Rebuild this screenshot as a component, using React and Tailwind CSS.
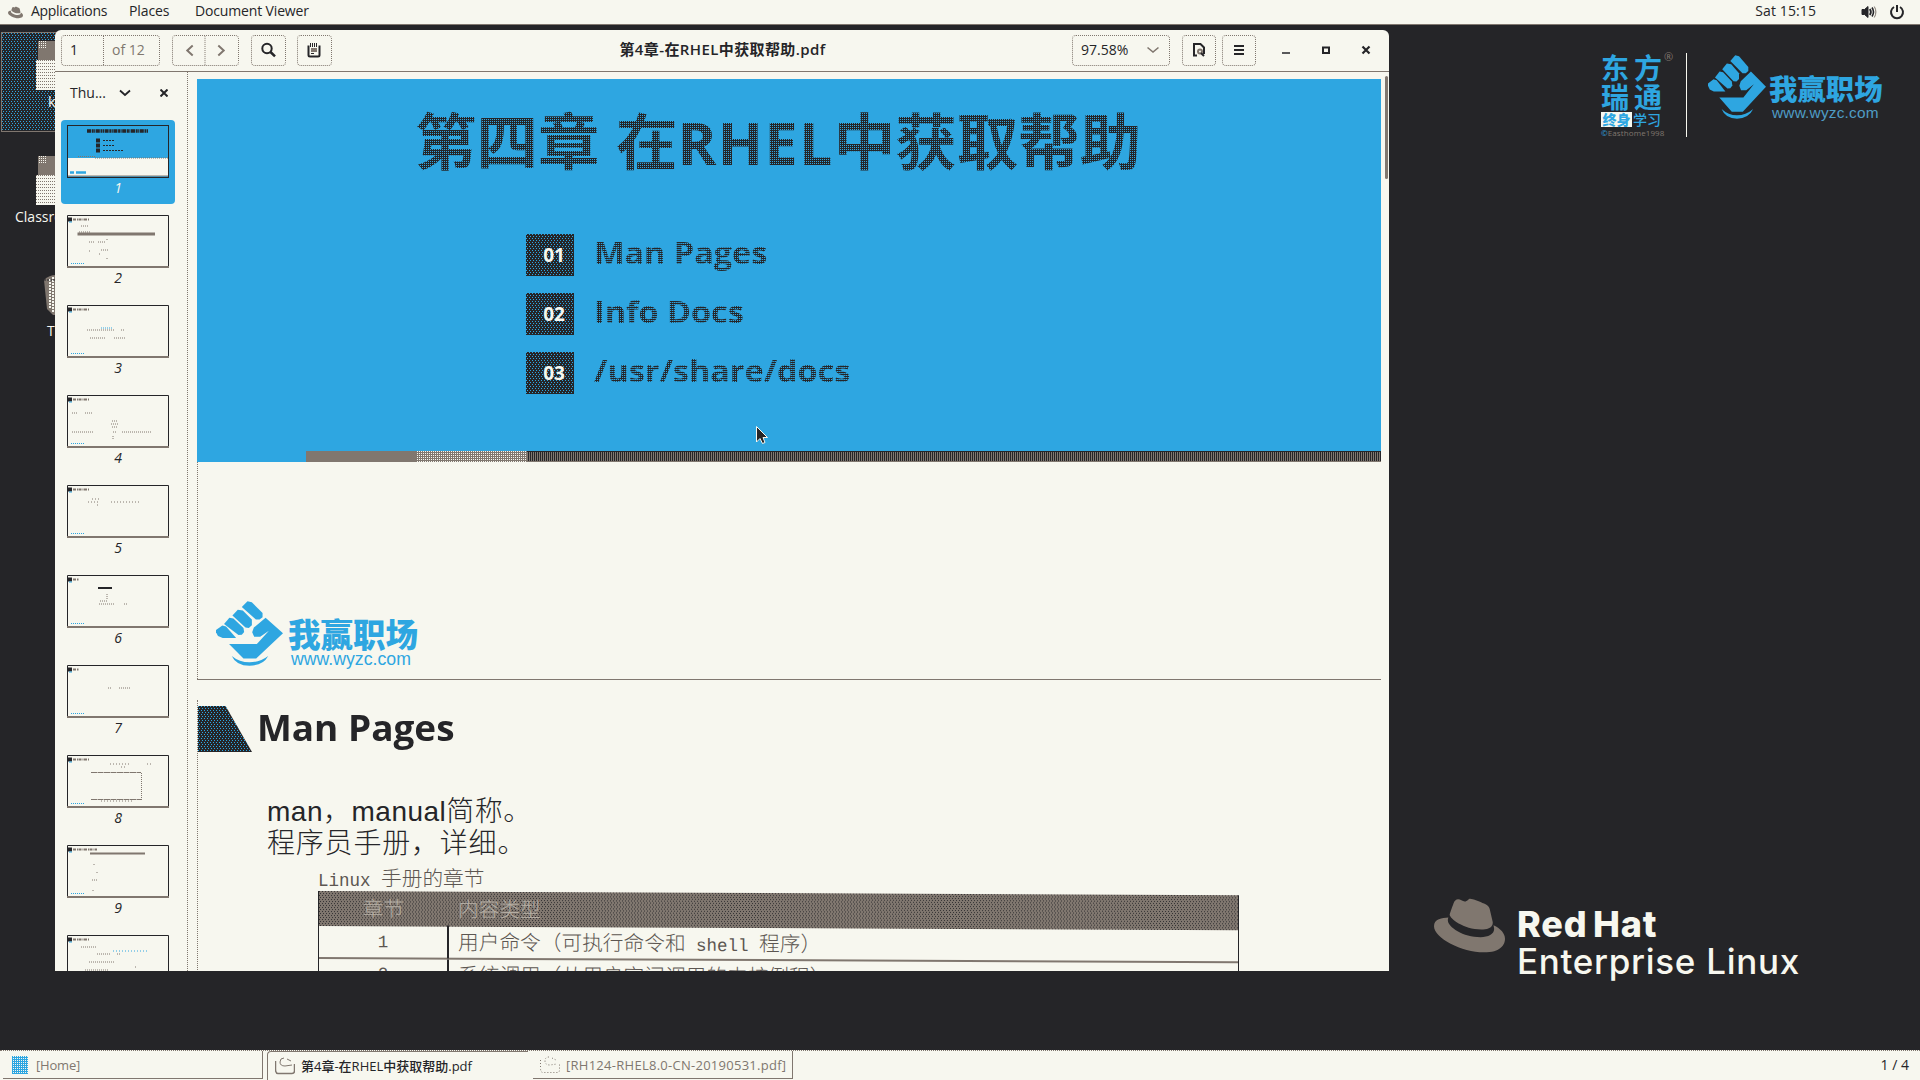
import React from "react";
import { SiRedhat } from "react-icons/si";

const UI = "font-['Open_Sans','Noto_Sans_CJK_SC',sans-serif]";
const CJK = "font-['Noto_Sans_CJK_SC',sans-serif]";
const DITHER = "bg-[conic-gradient(#2ea6e1_25%,#252528_0)] bg-[length:2px_2px]";
const SPECKLE =
  "bg-[#252528] bg-[image:conic-gradient(from_270deg_at_1px_1px,#2ea6e1_25%,transparent_0),conic-gradient(from_270deg_at_1px_1px,#2ea6e1_25%,transparent_0)] bg-[length:3px_4px] bg-[position:0_0,1px_2px]";
const GRAY_SPECKLE =
  "bg-[#80776f] bg-[image:conic-gradient(from_270deg_at_1px_1px,#252528_25%,transparent_0),conic-gradient(from_270deg_at_1px_1px,#252528_25%,transparent_0)] bg-[length:3px_4px] bg-[position:0_0,1px_2px]";

function Fist({ className }) {
  return (
    <svg viewBox="0 0 200 193" className={className} fill="#2ea6e1" preserveAspectRatio="none">
      <path d="M94 1 107 4 139 36V48L130 55H119L77 18Z" />
      <path d="M65 26 80 28 107 55V72L98 80 88 79 49 43Z" />
      <path d="M40 50 52 52 82 80 84 92 77 100 67 101 24 68Z" />
      <path d="M19 73 30 76 60 110H20L6 104 0 93V86Z" />
      <path d="M148 50 200 96 120 171H82L39 128H122L158 88 132 106H114L108 93 113 79Z" />
      <path d="M47 163Q70 182 100 182T156 163Q140 192 100 192T47 163Z" />
    </svg>
  );
}

function TopBar() {
  return (
    <header className="flex h-[25px] shrink-0 items-center border-b border-[#80776f] bg-[#f7f7ef] pb-[2px] text-sm leading-[22px]">
      <SiRedhat className="mt-0.5 ml-2 size-[15px] text-[#80776f]" />
      <span className="ml-2 w-[98px] tracking-[-0.3px]">Applications</span>
      <span className="w-[66px] tracking-[-0.1px]">Places</span>
      <span className="tracking-[-0.15px]">Document Viewer</span>
      <span className="ml-auto tracking-[0.1px]">Sat 15:15</span>
      <svg viewBox="0 0 16 14" className="mt-px ml-[45px] h-[14px] w-4" fill="none" stroke="#252528">
        <path d="M1 4.5H3.5L7 1.5V12.5L3.5 9.5H1Z" fill="#252528" />
        <path d="M8.8 4Q11 7 8.8 10" strokeWidth="1.8" />
        <path d="M11 2.5Q14 7 11 11.5" strokeWidth="1.6" />
        <path d="M13.3 1.5Q16.5 7 13.3 12.5" stroke="#80776f" />
      </svg>
      <svg viewBox="0 0 16 16" className="mt-px mr-[15px] ml-3 size-4" fill="none" stroke="#252528" strokeWidth="2">
        <path d="M5 3A6 6 0 1 0 11 3M8 1V8" />
      </svg>
    </header>
  );
}

function Folder() {
  return (
    <div className="flex w-6 flex-col">
      <div className="ml-0.5 h-[19px] bg-[#80776f]">
        <div className="size-2 bg-[conic-gradient(#f7f7ef_25%,#80776f_0)] bg-[length:2px_2px]" />
      </div>
      <div className="h-[30px] bg-[conic-gradient(from_270deg_at_1px_1px,#80776f_25%,#f7f7ef_0)] bg-[length:2px_3px]" />
    </div>
  );
}

function DesktopIcons() {
  return (
    <div className="absolute top-[7px] left-px w-[90px] text-sm text-[#f7f7ef]">
      <div className={`h-[100px] w-[60px] border border-[#80776f] pt-2 pl-[34px] ${SPECKLE}`}>
        <Folder />
        <div className="pt-[2px] pl-3 leading-5">kiosk</div>
      </div>
      <div className="pt-6 pl-[35px]">
        <Folder />
      </div>
      <div className="pl-[14px] leading-[24px]">Classroom</div>
      <svg viewBox="0 0 24 40" className="mt-[46px] ml-[43px] h-10 w-6">
        <path d="M0 5Q5 0 12 0H24V40H9L3 34Z" fill="#80776f" />
        <path d="M6 4V34M9 2V37" stroke="#f7f7ef" strokeWidth="2" strokeDasharray="2 1" />
        <path d="M0 5H24" stroke="#252528" strokeDasharray="2 1" />
      </svg>
      <div className="pt-[4px] pl-[46px] leading-6">Trash</div>
    </div>
  );
}

function CompanyLogos() {
  return (
    <div className="absolute top-[28px] right-[37px] flex h-[84px] text-[#2ea6e1]">
      <div className={`w-[61px] font-bold ${CJK}`}>
        <div className="flex justify-between text-[28px] leading-[29px]"><span>东</span><span>方</span></div>
        <div className="flex justify-between text-[28px] leading-[29px]"><span>瑞</span><span>通</span></div>
        <div className="mt-[1px] flex text-[14px] leading-[15px]">
          <span className="w-[31px] bg-[#f7f7ef] text-center font-black">终身</span>
          <span className="w-[30px] text-center font-medium">学习</span>
        </div>
        <div className="pt-[2px] font-['Open_Sans',sans-serif] text-[8px] leading-[8px] font-normal tracking-[0.1px] whitespace-nowrap text-[#80776f]">
          <span className="text-[#2ea6e1]">©</span>Easthome1998
        </div>
      </div>
      <span className="w-[24px] pl-[2px] text-[11px] leading-[8px] text-[#80776f]">®</span>
      <div className="h-[84px] w-px bg-[#f7f7ef]" />
      <Fist className="mt-[2px] ml-[21px] h-[64px] w-[58px]" />
      <div className="ml-[3px] w-[114px] pt-[18px]">
        <div className={`text-[28.400px] leading-[34px] font-black whitespace-nowrap ${CJK}`}>我赢职场</div>
        <div className="pl-[3px] font-['Liberation_Sans',sans-serif] text-[15.4px] leading-[16px] tracking-[0.200px] text-[#4f9cc4]">www.wyzc.com</div>
      </div>
    </div>
  );
}

function RedHatLogo() {
  return (
    <div className="absolute top-[863px] left-[1434px] flex font-['Inter',sans-serif] text-[#f7f7ef]">
      <SiRedhat className="mt-[2px] size-[71px] text-[#80776f]" />
      <div className="ml-[12px] pt-[18px] whitespace-nowrap">
        <div className="text-[36px] leading-[37px] font-extrabold tracking-[0.800px] [word-spacing:-3px]">Red Hat</div>
        <div className="text-[35px] leading-[36px] font-medium tracking-[0.700px]">Enterprise Linux</div>
      </div>
    </div>
  );
}

const BOX = "flex h-[31px] items-center rounded border border-dotted border-[#80776f]";

function HeaderBar() {
  return (
    <div className="flex h-[42px] shrink-0 items-center border-b border-[#80776f] pb-px pl-[6px] text-sm">
      <div className={`${BOX} w-[99px]`}>
        <span className="w-[41px] pl-[8px]">1</span>
        <span className="h-[29px] flex-1 border-l border-dotted border-[#80776f] pl-[8px] leading-[28px] text-[#80776f]">of 12</span>
      </div>
      <div className={`${BOX} ml-3 w-[67px]`}>
        <svg viewBox="0 0 66 29" className="h-[29px] w-[66px]" fill="none" stroke="#80776f" strokeWidth="2">
          <path d="M20 9.500 14.500 14.500 20 19.500M46 9.500 51.500 14.500 46 19.500" />
          <path d="M32.500 0V29" strokeWidth="1" strokeDasharray="1 1" />
        </svg>
      </div>
      <div className={`${BOX} ml-3 w-[35px] pl-2`}>
        <svg viewBox="0 0 16 16" className="size-4" fill="none" stroke="#252528">
          <circle cx="7" cy="6.500" r="4.700" strokeWidth="2" />
          <path d="M10.500 10 15 14.300" strokeWidth="2.500" />
        </svg>
      </div>
      <div className={`${BOX} ml-[11px] w-[35px] pl-2`}>
        <svg viewBox="0 0 16 16" className="size-4" fill="none" stroke="#252528">
          <path d="M2.500 3.500V13Q2.500 14.500 4 14.500H12Q13.500 14.500 13.500 13V3.500" strokeWidth="2" />
          <path d="M4.500 1V5M6.500 1V5M8.500 1V5M10.500 1V5" />
          <path d="M5 7H11M5 9H11" stroke="#80776f" strokeWidth="2" />
          <path d="M5 11.500H8" />
        </svg>
      </div>
      <div className="flex-1 pl-[41px] text-center text-[15px] font-semibold tracking-[0.4px]">
        第4章-在RHEL中获取帮助.pdf
      </div>
      <div className={`${BOX} w-[98px] pr-2.5 pl-2`}>
        <span>97.58%</span>
        <svg viewBox="0 0 12 8" className="ml-auto h-2 w-3" fill="none" stroke="#80776f" strokeWidth="1.600"><path d="M.5 1.500 6 6 11.500 1.500" /></svg>
      </div>
      <div className={`${BOX} ml-3 w-[34px] justify-center`}>
        <svg viewBox="0 0 14 16" className="h-4 w-3.5" fill="none" stroke="#252528" strokeWidth="2">
          <path d="M5 13.500H2V2H8.500L12 5.500V12" />
          <circle cx="8" cy="9.500" r="2" stroke="#80776f" />
          <path d="M9 11 12 14" />
        </svg>
      </div>
      <div className={`${BOX} ml-[6px] w-[34px] justify-center`}>
        <svg viewBox="0 0 10 10" className="size-2.5" stroke="#252528" strokeWidth="2"><path d="M0 1H10M0 5H10M0 9H10" /></svg>
      </div>
      <svg viewBox="0 0 90 10" className="mr-[18px] ml-[25px] h-2.5 w-[90px]" fill="none" stroke="#252528">
        <path d="M1 8H9" strokeWidth="1.600" />
        <rect x="42" y="2.500" width="6" height="5.500" strokeWidth="2" />
        <path d="M81.500 1.500 88.500 8.500M88.500 1.500 81.500 8.500" strokeWidth="2.200" />
      </svg>
    </div>
  );
}

/* Miniature page drawings: [stroke colour, path, width, dash pattern] */
const THUMBS = [
  null,
  [["#80776f", "M10.500 19H88", 3, ""], ["#80776f", "M22 27H27M31 27H38M34 35H42M22 36H24M40 24V25M32 39H34M40 43V44", 1, "1 1"], ["#80776f", "M12 17H24M14 11H22", 1, "1 1"]],
  [["#80776f", "M20 25H48M54 25H58M23 33H38M47 33H58", 1, "1 1"], ["#2ea6e1", "M34 23H45", 1, "1 1"]],
  [["#80776f", "M5 18H11M18 18H26M45 26H51M44 29H52M45 32H50M5 37H26M46 37H50M55 37H84M46 41V45", 1, "1 1"]],
  [["#80776f", "M21 17H32M44 17H72M30 20H33M25 14H32", 1, "1 2"]],
  [["#252528", "M31 13H45", 2, ""], ["#80776f", "M33 26H41M32 29H48M57 29H60M40 19V24", 1, "1 1"]],
  [["#80776f", "M41 23H44M52 23H63", 1, "1 1"]],
  [["#80776f", "M24 17.500H74M24 44.500H75", 1, "6 .5"], ["#80776f", "M74.500 18V44", 1, "1 1"], ["#80776f", "M43 9H64M80 9H84M34 46H65M54 12H60", 1, "1 2"]],
  [["#80776f", "M23 8.500H78", 2, ""], ["#80776f", "M27 19V21M30 27V28M25 35H30M26 45V46", 1, "1 1"]],
  [["#80776f", "M14 12H29M30 19H43M50 19H53M22 27H47M18 35H41M68 32H69", 1, "1 1"], ["#2ea6e1", "M46 16H80", 1, "1 2"]],
];

function Thumb({ index, marks }) {
  const n = index + 1;
  if (!marks) {
    return (
      <div className="flex h-[90px] w-full flex-col items-center">
        <div className="flex h-[84px] w-[114px] flex-col items-center rounded-sm bg-[#2ea6e1] pt-[5px] text-[#f7f7ef]">
          <svg viewBox="0 0 102 53" className="h-[53px] w-[102px]">
            <rect x=".5" y=".5" width="101" height="52" fill="#2ea6e1" stroke="#252528" />
            <rect x="1" y="33" width="100" height="18" fill="#f7f7ef" />
            <path d="M1 51H101" stroke="#80776f" />
            <path d="M11 31.500H28M28 33H101" stroke="#80776f" strokeDasharray="1 1" />
            <path d="M20 6H81" stroke="#252528" strokeWidth="3.500" strokeDasharray="4 .7 2 .5 1 .6" />
            <path d="M29 15.500H33M29 20.500H33M29 25.500H33" stroke="#252528" strokeWidth="4" />
            <path d="M36 15.500H48M36 20.500H47M36 25.500H56" stroke="#252528" strokeDasharray="2 1" />
            <path d="M3 47.500H7M9 47.500H19" stroke="#2ea6e1" strokeWidth="2.500" />
          </svg>
          <span className="text-sm leading-[20px] italic">1</span>
        </div>
      </div>
    );
  }
  return (
    <div className="flex h-[90px] w-full shrink-0 flex-col items-center pt-[5px]">
      <svg viewBox="0 0 102 53" className="h-[53px] w-[102px] shrink-0" fill="none">
        <path d="M.5 53V.5H101.500V53" stroke="#252528" />
        <path d="M0 52H102" stroke="#80776f" strokeWidth="2" />
        <path d="M1 4.500H5" stroke="#252528" strokeWidth="4" />
        <path d="M2 7H5" stroke="#2ea6e1" />
        <path d={index === 5 || index === 6 ? "M6 4.500H12" : index === 8 ? "M6 4.500H30" : "M6 4.500H22"} stroke="#80776f" strokeWidth="2" strokeDasharray="3 1 1 .5" />
        <path d="M4 48.500H17" stroke="#2ea6e1" strokeDasharray="1 1" />
        {marks.map(([c, d, w, dash], i) => (
          <path key={i} d={d} stroke={c} strokeWidth={w} strokeDasharray={dash || undefined} />
        ))}
      </svg>
      <span className="text-sm leading-[20px] italic">{n}</span>
    </div>
  );
}

function Sidebar() {
  return (
    <aside className="flex w-[133px] shrink-0 flex-col overflow-hidden border-r border-dotted border-[#80776f]">
      <div className="flex h-[48px] shrink-0 items-center pb-[7px] pl-[15px] text-sm">
        <span className="w-[49px]">Thu...</span>
        <svg viewBox="0 0 12 8" className="h-2 w-3" fill="none" stroke="#252528" strokeWidth="1.800"><path d="M1 1.500 6 6 11 1.500" /></svg>
        <svg viewBox="0 0 8 8" className="ml-[29px] size-2" stroke="#252528" strokeWidth="2"><path d="M.5.5 7.500 7.500M7.500.5.5 7.500" /></svg>
      </div>
      <div className="flex flex-col pr-[6px]">
        {THUMBS.map((marks, i) => <Thumb key={i} index={i} marks={marks} />)}
      </div>
    </aside>
  );
}

const TOPICS = [["01", "Man Pages"], ["02", "Info Docs"], ["03", "/usr/share/docs"]];

function PageOne() {
  return (
    <section className="flex h-[601px] w-[1184px] shrink-0 flex-col border-b border-[#80776f]">
      <div className="h-[372px] bg-[#2ea6e1]">
        <h1 className={`h-[155px] pt-[16px] pl-[218px] text-[61.500px] leading-[88px] font-bold whitespace-nowrap text-transparent ${CJK}`}>
          <span className={`inline-block bg-clip-text ${DITHER}`}>
            第四章<span className="text-[72px] leading-none"> </span>在<span className="font-['Open_Sans'] text-[59px] tracking-[1.500px]">RHEL</span>中获取帮助
          </span>
        </h1>
        <ul className="flex flex-col gap-[17px] pl-[329px]">
          {TOPICS.map(([num, label]) => (
            <li key={num} className="flex h-[42px] items-center">
              <span className={`flex h-[42px] w-[48px] items-center justify-center pl-2 text-[19px] font-bold text-[#f7f7ef] ${SPECKLE}`}>{num}</span>
              <span className={`ml-[20px] inline-block origin-left scale-x-[1.045] bg-clip-text pb-[6px] text-[31px] leading-[42px] font-bold text-transparent ${DITHER}`}>{label}</span>
            </li>
          ))}
        </ul>
      </div>
      <div className="flex h-[11px]">
        <div className="w-[109px] bg-[#2ea6e1]" />
        <div className="w-[110px] bg-[#80776f]" />
        <div className="w-[111px] bg-[conic-gradient(#f7f7ef_25%,#80776f_0)] bg-[length:2px_2px]" />
        <div className="flex-1 border-t border-b border-t-[#252528] border-b-[#80776f] bg-[linear-gradient(90deg,#80776f_50%,#252528_0)] bg-[length:2px_2px]" />
      </div>
      <div className="flex flex-1 border-l border-dotted border-[#80776f] pt-[139px] pl-[18px] text-[#2ea6e1]">
        <Fist className="h-[65px] w-[67px]" />
        <div className="ml-[5px] pt-[13px]">
          <div className={`text-[32.500px] leading-[37px] font-black whitespace-nowrap ${CJK}`}>我赢职场</div>
          <div className="pl-[3px] font-['Liberation_Sans',sans-serif] text-[17.700px] leading-[17px]">www.wyzc.com</div>
        </div>
      </div>
    </section>
  );
}

function PageTwo() {
  return (
    <section className="mt-[20px] flex h-[280px] w-[1184px] shrink-0 flex-col overflow-hidden border-l border-dotted border-[#80776f]">
      <div className="mt-[6px] flex h-[46px] items-center">
        <div className={`h-[46px] w-[54px] [clip-path:polygon(0_0,51%_0,100%_100%,0_100%)] ${SPECKLE}`} />
        <h2 className="ml-[5px] origin-left scale-x-[1.055] pb-[2px] text-[35px] leading-[46px] font-bold">Man Pages</h2>
      </div>
      <div className={`mt-[42px] pl-[69px] text-[28px] leading-[31px] font-light ${CJK}`}>
        <p className="tracking-[0.500px]"><span className="font-['Liberation_Sans'] font-normal">man</span>，<span className="font-['Liberation_Sans'] font-normal">manual</span>简称。</p>
        <p className="-mt-px tracking-[0.800px]">程序员手册，详细。</p>
      </div>
      <p className={`mt-[8px] h-[25px] pl-[120px] text-[20.700px] leading-[24px] font-light text-[#5c5651] ${CJK}`}>
        <span className="font-['Liberation_Mono'] text-[17.500px]">Linux </span>手册的章节
      </p>
      <div className={`mt-px ml-[120px] w-[921px] shrink-0 origin-top-left skew-y-[0.270deg] border-x border-[#252528] text-[20.700px] font-light text-[#5c5651] ${CJK}`}>
        <div className={`flex h-[35px] items-center pb-[2px] text-[#b5aea4] ${GRAY_SPECKLE}`}>
          <span className="w-[129px] text-center">章节</span>
          <span className="pl-[10px]">内容类型</span>
        </div>
        <div className="flex h-[33px] items-center border-b-2 border-[#80776f]">
          <span className="h-[33px] w-[130px] border-r-2 border-[#252528] text-center font-['Liberation_Mono'] text-[17.500px] leading-[34px]">1</span>
          <span className="pl-[9px] leading-[28px]">用户命令（可执行命令和<span className="font-['Liberation_Mono'] text-[17.500px]"> shell </span>程序）</span>
        </div>
        <div className="flex h-[33px] items-start">
          <span className="h-[33px] w-[130px] border-r-2 border-[#252528] text-center font-['Liberation_Mono'] text-[17.500px] leading-[30px]">2</span>
          <span className="pl-[9px] leading-[28px]">系统调用（从用户空间调用的内核例程）</span>
        </div>
      </div>
    </section>
  );
}

function ViewerWindow() {
  return (
    <main className="absolute top-[5px] left-[55px] flex h-[941px] w-[1334px] flex-col overflow-hidden rounded-t-md bg-[#f7f7ef]">
      <HeaderBar />
      <div className="flex min-h-0 flex-1">
        <Sidebar />
        <div className="flex min-w-0 flex-1 flex-col pt-[7px] pl-[9px]">
          <PageOne />
          <PageTwo />
        </div>
      </div>
      <div className="absolute top-[46px] right-px h-[103px] w-[3px] rounded bg-[#80776f]" />
      <svg viewBox="0 0 12 18" className="absolute top-[396px] left-[701px] h-[18px] w-3">
        <path d="M.5.5V16L4 12.500 6.500 17.500 9 16.500 7 11.500H11.500Z" fill="#252528" stroke="#f7f7ef" />
      </svg>
    </main>
  );
}

function DocIcon({ dashed }) {
  return (
    <svg viewBox="0 0 20 18" className="h-[18px] w-5 shrink-0" fill="none" stroke="#80776f" strokeDasharray={dashed ? "1 2" : undefined}>
      <path d="M.5 4V12Q.5 16.500 3 16.500H17Q19.500 16.500 19.500 14V7" strokeWidth={dashed ? 1 : 1.500} />
      <path d="M9 1Q5 1 5 5T10 9L17 8M12 2 16 4" />
    </svg>
  );
}

function TaskBar() {
  return (
    <footer className="flex h-[30px] shrink-0 border-t border-dotted border-[#80776f] bg-[#f7f7ef] text-sm leading-[28px] text-[#80776f]">
      <div className="mb-px ml-[3px] flex w-[260px] items-center border-r border-b border-[#80776f] pl-[9px]">
        <div className="h-[18px] w-4 bg-[conic-gradient(#f7f7ef_25%,#2ea6e1_0)] bg-[length:2px_2px]" />
        <span className="ml-2 text-[13px] tracking-[-0.200px]">[Home]</span>
      </div>
      <div className="ml-1 flex w-[261px] items-center rounded-tl border-t border-l border-[#80776f] pl-[7px] text-[#252528]">
        <DocIcon />
        <span className="ml-[6px] text-[13px] font-medium whitespace-nowrap">第4章-在RHEL中获取帮助.pdf</span>
      </div>
      <div className="mb-px ml-[5px] flex w-[260px] items-center border-r border-b border-[#80776f] pl-[7px]">
        <DocIcon dashed />
        <span className="ml-[6px] text-[13px] tracking-[0.270px] whitespace-nowrap">[RH124-RHEL8.0-CN-20190531.pdf]</span>
      </div>
      <span className="mr-[11px] ml-auto text-[#252528]">1 / 4</span>
    </footer>
  );
}

export default function App() {
  return (
    <div className={`flex h-[1080px] w-[1920px] flex-col overflow-hidden bg-[#252528] text-[#252528] ${UI}`}>
      <TopBar />
      <div className="relative min-h-0 flex-1">
        <DesktopIcons />
        <CompanyLogos />
        <RedHatLogo />
        <ViewerWindow />
      </div>
      <TaskBar />
    </div>
  );
}
